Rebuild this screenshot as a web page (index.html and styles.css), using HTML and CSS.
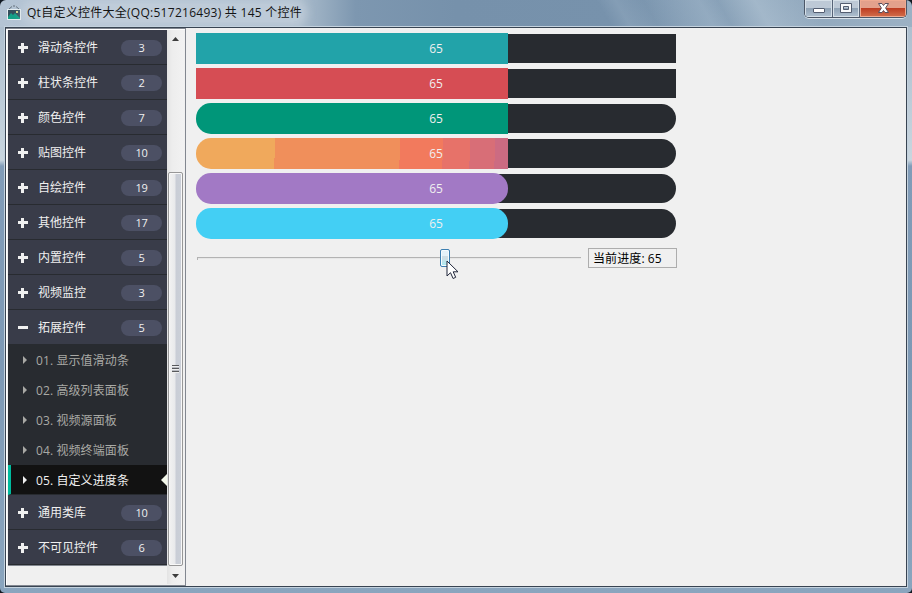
FILE: index.html
```html
<!DOCTYPE html>
<html lang="zh-CN">
<head>
<meta charset="utf-8">
<title>Qt自定义控件大全</title>
<link rel="stylesheet" href="styles.css">
</head>
<body>
<div class="window">
  <header class="titlebar">
    <svg class="app-icon" width="14" height="15" viewBox="0 0 14 15"><path d="M2 4 5 1.5M12 4 9 1.5M6 1h2" fill="none" stroke="#65717b"/><rect x=".5" y="4.5" width="13" height="10" fill="#344e5c" stroke="#e5edf0"/><path d="m1 12 3-4 2 2 2-2 5 5v1H1z" fill="#14a087"/><path d="M9 6h2v2H9z" fill="#d9d489"/></svg>
    <span class="title">Qt自定义控件大全(QQ:517216493) 共 145 个控件</span>
    <div class="controls">
      <span class="control"><svg width="27" height="17" viewBox="0 0 27 17"><rect x="8.5" y="8.5" width="11" height="4" rx=".5" fill="#fff" stroke="#535d70"/></svg></span>
      <span class="control"><svg width="26" height="17" viewBox="0 0 26 17"><path d="M7.500 3.500h11v9h-11zM10.500 6.500v3h5v-3z" fill="#f7f9fb" fill-rule="evenodd" stroke="#535d70"/></svg></span>
      <span class="control close"><svg width="46" height="17" viewBox="0 0 46 17"><path d="M18.500 3.500h3.500l1.500 2 1.500-2h3.500L25.600 8l2.900 4.500H25l-1.500-2-1.500 2h-3.500L21.400 8z" fill="#fff" stroke="#5a4f5c"/></svg></span>
    </div>
  </header>
  <div class="client">
    <aside class="sidebar">
      <nav class="menu">
        <div class="group"><i class="plus"></i><span>滑动条控件</span><b>3</b></div>
        <div class="group"><i class="plus"></i><span>柱状条控件</span><b>2</b></div>
        <div class="group"><i class="plus"></i><span>颜色控件</span><b>7</b></div>
        <div class="group"><i class="plus"></i><span>贴图控件</span><b>10</b></div>
        <div class="group"><i class="plus"></i><span>自绘控件</span><b>19</b></div>
        <div class="group"><i class="plus"></i><span>其他控件</span><b>17</b></div>
        <div class="group"><i class="plus"></i><span>内置控件</span><b>5</b></div>
        <div class="group"><i class="plus"></i><span>视频监控</span><b>3</b></div>
        <div class="group"><i class="plus minus"></i><span>拓展控件</span><b>5</b></div>
        <div class="item"><i></i><span>01. 显示值滑动条</span></div>
        <div class="item"><i></i><span>02. 高级列表面板</span></div>
        <div class="item"><i></i><span>03. 视频源面板</span></div>
        <div class="item"><i></i><span>04. 视频终端面板</span></div>
        <div class="item active"><i></i><span>05. 自定义进度条</span></div>
        <div class="group"><i class="plus"></i><span>通用类库</span><b>10</b></div>
        <div class="group"><i class="plus"></i><span>不可见控件</span><b>6</b></div>
      </nav>
      <div class="scrollbar">
        <div class="arrow-box"><svg width="7" height="4" viewBox="0 0 7 4"><path d="M0 4 3.500 0 7 4z" fill="#3c3c3c"/></svg></div>
        <div class="track"></div>
        <div class="thumb"><div class="grip"></div></div>
        <div class="arrow-box bottom"><svg width="7" height="4" viewBox="0 0 7 4"><path d="M0 0h7L3.500 4z" fill="#3c3c3c"/></svg></div>
      </div>
    </aside>
    <main class="content">
      <div class="progress"><div class="fill teal"></div><span>65</span></div>
      <div class="progress"><div class="fill red"></div><span>65</span></div>
      <div class="progress round"><div class="fill green"></div><span>65</span></div>
      <div class="progress round"><div class="fill sunset"></div><span>65</span></div>
      <div class="progress round"><div class="fill pill purple"></div><span>65</span></div>
      <div class="progress round"><div class="fill pill sky"></div><span>65</span></div>
      <div class="slider-row">
        <div class="slider"><div class="handle"></div>
          <svg class="cursor" width="13" height="20" viewBox="0 0 13 20"><path d="M1 1v15l3.500-3.300 2.600 5.800 2.600-1.200-2.500-5.500H12z" fill="#fff" stroke="#20263a"/></svg>
        </div>
        <div class="value">当前进度: 65</div>
      </div>
    </main>
  </div>
</div>
</body>
</html>
```
FILE: styles.css
```css
* { box-sizing: border-box; }
body {
  margin: 0;
  width: 912px;
  height: 593px;
  overflow: hidden;
  background: #111820;
  font: 12px/18px "Open Sans", "Noto Sans CJK SC", sans-serif;
}
.window {
  width: 912px;
  height: 593px;
  display: flex;
  flex-direction: column;
  border-radius: 6px 6px 5px 5px;
  padding: 0 5px 6px;
  background:
    linear-gradient(60deg, transparent 66%, #9fb5c955 68%, transparent 71%, #a5bacd66 77%, transparent 79%, #b6c8d788 83%, transparent 89%) top / 912px 27px no-repeat,
    linear-gradient(90deg, #b4c4d4, #a9bbcb 33%, #7d97b0 39%, #7691ab 50%, #7792ac 68%, #88a1b8 78%, #9cb1c4) top / 912px 27px no-repeat,
    linear-gradient(#a9bbcc, #c9d6df 27%, #819cb8 28%, #7d99b5 62%, #8aa5be);
}
.titlebar {
  height: 26px;
  flex: none;
  display: flex;
  align-items: flex-start;
  padding-left: 2px;
}
.app-icon { margin-top: 5px; }
.title {
  margin: 4px 0 0 6px;
  color: #141414;
  letter-spacing: .27px;
  white-space: nowrap;
  border-radius: 10px;
  background: #c9d4df99;
  box-shadow: 0 0 8px 5px #c9d4df99;
}
.controls {
  display: flex;
  margin-left: auto;
  height: 18px;
  border: 1px solid #4c5767;
  border-top: 0;
  border-radius: 0 0 5px 5px;
  overflow: hidden;
  box-shadow: 0 1px #d7e1e9;
}
.control {
  display: block;
  border-right: 1px solid #566377;
  box-shadow: inset 0 0 0 1px #d6e0e8;
  background: linear-gradient(#bdc9d6 0 45%, #8ea1b4 48%, #b0c1d1);
}
.control svg { display: block; }
.close {
  border-right: 0;
  box-shadow: inset 0 0 0 1px #efaa91;
  background: linear-gradient(#e3a18c 0 45%, #bd3c21 48%, #d26f4c);
}
.client {
  height: 560px;
  display: flex;
  border: 1px solid #384452;
  outline: 1px solid #c4d2de;
  background: #f0f0f0;
  margin-top: 1px;
}
.sidebar {
  width: 180px;
  display: flex;
  border-top: 1px solid #828790;
  border-right: 1px solid #828790;
  border-bottom: 1px solid #828790;
  padding: 1px 1px 1px 2px;
  background: #f0f0f0;
  margin-left: -1px;
  margin-left: 0;
  box-shadow: inset 1px 1px #fff;
}
.menu {
  width: 159px;
  height: 536px;
  border-bottom: 1px solid #828790;
}
.group {
  height: 35px;
  display: flex;
  align-items: center;
  padding: 1px 5px 0 10px;
  background: #393c49;
  border-bottom: 1px solid #282b30;
  color: #f0f0f0;
}
.group span { padding-top: 1px; }
.group b {
  width: 41px;
  height: 16px;
  margin: 1px 0 0 auto;
  border-radius: 8px;
  background: #4c5064;
  text-align: center;
  font-weight: 400;
  font-size: 11px;
  line-height: 16px;
  letter-spacing: -.2px;
}
.plus {
  width: 10px;
  height: 10px;
  margin-right: 10px;
  background:
    linear-gradient(#f0f0f0, #f0f0f0) 0 3px / 10px 3px no-repeat,
    linear-gradient(#f0f0f0, #f0f0f0) 3px 0 / 3px 10px no-repeat;
}
.minus { background-size: 10px 3px, 0 0; }
.item {
  height: 30px;
  position: relative;
  display: flex;
  align-items: center;
  padding-left: 15px;
  background: #282b30;
  color: #a9a9a5;
}
.item span { padding-top: 2px; letter-spacing: .1px; }
.item i {
  width: 0;
  margin-right: 9px;
  border: 4px solid transparent;
  border-left-color: currentColor;
  border-right-width: 0;
}
.active {
  padding-left: 12px;
  border-left: 3px solid #00bb9e;
  border-bottom: 1px solid #282b30;
  background: #121212;
  color: #f0f0f0;
}
.active::after {
  content: "";
  position: absolute;
  right: 0;
  top: 9px;
  border: 6px solid transparent;
  border-right-color: #f4f8ea;
  border-left: 0;
}
.scrollbar {
  width: 17px;
  display: flex;
  flex-direction: column;
  align-items: center;
  background: linear-gradient(90deg, #e3e3e3, #ededed 5px, #f2f2f2);
}
.arrow-box {
  height: 17px;
  display: flex;
  align-items: center;
}
.bottom { padding-top: 3px; }
.track { height: 125px; }
.thumb {
  width: 15px;
  height: 394px;
  display: flex;
  align-items: center;
  justify-content: center;
  border: 1px solid #979797;
  border-radius: 2px;
  box-shadow: inset 0 0 0 1px #f8f8f8;
  background: linear-gradient(90deg, #f2f2f2, #e8e9eb 6px, #c9cdd6 7px, #cbd0d8);
}
.grip {
  width: 7px;
  height: 8px;
  background: repeating-linear-gradient(#58595c 0 1px, #eee 1px 2px, #b8bac0 2px 3px);
}
.content {
  flex: 1;
  padding: 5px 0 0 10px;
}
.progress {
  width: 480px;
  height: 31px;
  margin-bottom: 4px;
  display: grid;
  place-items: center;
  background: linear-gradient(#282b30, #282b30) 0 1px / 480px 29px no-repeat;
  color: #f0f0f0;
}
.round { background: none; }
.round::before {
  content: "";
  grid-area: 1 / 1;
  width: 240px;
  height: 29px;
  justify-self: end;
  border-radius: 0 15px 15px 0;
  background: #282b30;
}
.fill {
  grid-area: 1 / 1;
  width: 312px;
  height: 31px;
  justify-self: start;
  z-index: 1;
}
.progress span { grid-area: 1 / 1; z-index: 2; }
.round .fill { border-radius: 15px 0 0 15px; }
.round .pill { border-radius: 15px; }
.teal { background: #22a3a9; }
.red { background: #d64d54; }
.green { background: #009679; }
.sunset { background: linear-gradient(91.5deg, #f0a95c 0 79px, #f08f5b 79px 204px, #f27a5d 204px 247px, #e77269 247px 274px, #d86e77 274px 299px, #cc6b82 299px); }
.purple { background: #a279c5; }
.sky { background: #43cff4; }
.slider-row {
  display: flex;
  align-items: center;
  padding-top: 5px;
}
.slider {
  position: relative;
  width: 385px;
  height: 20px;
  margin-right: 7px;
  background:
    linear-gradient(#b3b3b3, #b3b3b3) 1px 9px / 1px 3px no-repeat,
    linear-gradient(#b3b3b3 0 1px, #e7e7e7 1px) 1px 9px / 384px 2px no-repeat;
}
.handle {
  position: absolute;
  left: 244px;
  top: 1px;
  width: 10px;
  height: 18px;
  border: 1px solid #3c7fb1;
  border-radius: 2px;
  box-shadow: inset 0 0 0 1px #f6fcff;
  background: linear-gradient(#e5f2f9 0 35%, #cfdee5 35% 50%, #a9edf5);
}
.cursor {
  position: absolute;
  left: 250px;
  top: 12px;
}
.value {
  width: 89px;
  height: 20px;
  padding: 1px 0 0 4px;
  border: 1px solid #adadad;
  color: #000;
  line-height: 18px;
  letter-spacing: .1px;
}
```
